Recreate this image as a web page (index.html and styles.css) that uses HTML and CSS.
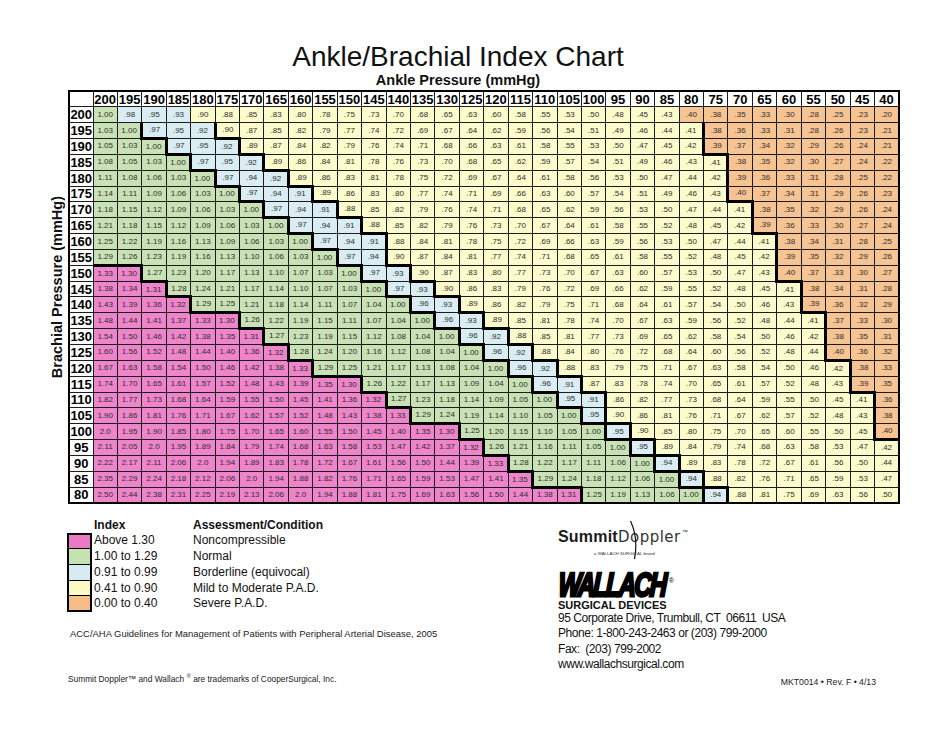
FILE: index.html
```html
<!DOCTYPE html>
<html lang="en">
<head>
<meta charset="utf-8">
<title>Ankle/Brachial Index Chart</title>
<link rel="stylesheet" href="styles.css">
</head>
<body>
<main class="page">
  <header class="titles">
    <h1 class="title">Ankle/Brachial Index Chart</h1>
    <h2 class="axis-x">Ankle Pressure (mmHg)</h2>
  </header>

  <section class="chart">
    <div class="ylabel-wrap"><span class="ylabel">Brachial Pressure (mmHg)</span></div>
    <table class="abi" id="abi"></table>
  </section>

  <section class="lower">
    <div class="legend-col">
      <div class="legend-head">
        <span></span>
        <span class="lg-text">Index</span>
        <span class="lg-text">Assessment/Condition</span>
      </div>
      <ul class="legend-list">
        <li class="legend-row"><span class="sw sw-p"></span><span class="lg-text">Above 1.30</span><span class="lg-text">Noncompressible</span></li>
        <li class="legend-row"><span class="sw sw-g"></span><span class="lg-text">1.00 to 1.29</span><span class="lg-text">Normal</span></li>
        <li class="legend-row"><span class="sw sw-b"></span><span class="lg-text">0.91 to 0.99</span><span class="lg-text">Borderline (equivocal)</span></li>
        <li class="legend-row"><span class="sw sw-y"></span><span class="lg-text">0.41 to 0.90</span><span class="lg-text">Mild to Moderate P.A.D.</span></li>
        <li class="legend-row"><span class="sw sw-o"></span><span class="lg-text">0.00 to 0.40</span><span class="lg-text">Severe P.A.D.</span></li>
      </ul>
      <p class="source">ACC/AHA Guidelines for Management of Patients with Peripheral Arterial Disease, 2005</p>
    </div>

    <div class="brand-col">
      <div class="summit"><span class="summit-bold">Summit</span><span class="summit-light">D<span class="o-mark">o<svg class="o-arc" viewBox="0 0 10 38" width="10" height="38" aria-hidden="true"><path d="M1.5 0 Q 9.5 17 5.5 38" fill="none" stroke="#111" stroke-width="1.2"/></svg></span>ppler</span><span class="tm">™</span></div>
      <div class="summit-sub">a WALLACH SURGICAL brand</div>
      <div class="wallach-line"><span class="wallach">WALLACH</span><span class="reg">®</span></div>
      <div class="surgical">SURGICAL DEVICES</div>
      <address class="address">
        <span class="addr-line">95 Corporate Drive, Trumbull, CT&nbsp; 06611&nbsp; USA</span>
        <span class="addr-line">Phone: 1-800-243-2463 or (203) 799-2000</span>
        <span class="addr-line">Fax:&nbsp; (203) 799-2002</span>
        <span class="addr-line">www.wallachsurgical.com</span>
      </address>
    </div>
  </section>

  <footer class="footer">
    <span class="tmk">Summit Doppler™ and Wallach <sup class="tmk-reg">®</sup> are trademarks of CooperSurgical, Inc.</span>
    <span class="mkt">MKT0014 • Rev. F • 4/13</span>
  </footer>
</main>
<script src="script.js"></script>
</body>
</html>
```

FILE: styles.css
```css
html, body {
  margin: 0;
  padding: 0;
  background: #fff;
}

body {
  font-family: "Liberation Sans", Arial, sans-serif;
  color: #111;
}

.page {
  width: 950px;
  height: 735px;
  overflow: hidden;
}

/* ---------- titles ---------- */
.titles {
  width: 916px;
  padding-top: 42px;
  text-align: center;
}

.title {
  margin: 0;
  font-weight: normal;
  font-size: 28px;
  line-height: 30px;
  color: #111;
}

.axis-x {
  margin: 0;
  font-weight: bold;
  font-size: 14.5px;
  line-height: 17px;
  color: #111;
}

/* ---------- chart ---------- */
.chart {
  display: flex;
  margin-top: 1px;
  padding-left: 48px;
}

.ylabel-wrap {
  width: 18px;
  margin-right: 2px;
  padding-bottom: 20px;
  display: flex;
  align-items: center;
  justify-content: center;
}

.ylabel {
  writing-mode: vertical-rl;
  transform: rotate(180deg);
  font-weight: bold;
  font-size: 14.5px;
  line-height: 18px;
  white-space: nowrap;
  color: #111;
}

.abi {
  border-collapse: collapse;
  table-layout: fixed;
  width: 832px;
  border: 2px solid #000;
}

.abi .col-lab {
  width: 24px;
}

.abi tr {
  height: 15.85px;
}

.abi th,
.abi td {
  border: 1px solid #1c1c1c;
  padding: 0;
  text-align: center;
  vertical-align: middle;
  white-space: nowrap;
  overflow: hidden;
}

.abi th {
  font-weight: bold;
  font-size: 13px;
  line-height: 1;
  color: #000;
  background: #fff;
}

.abi td {
  font-size: 8px;
  line-height: 1;
  color: #2e2e2e;
}

.v-p { background: #ee84c9; }
.v-g { background: #c9e2b5; }
.v-b { background: #d9edf2; }
.v-y { background: #fcfbcb; }
.v-o { background: #f6c392; }

.abi td.edge-t { border-top: 3px solid #000; }
.abi td.edge-l { border-left: 3px solid #000; }

/* ---------- lower area ---------- */
.lower {
  display: flex;
  align-items: flex-start;
  margin-top: 14px;
  padding-left: 67px;
}

.legend-col {
  width: 490px;
}

.legend-head,
.legend-row {
  display: grid;
  grid-template-columns: 25px 99px 1fr;
}

.legend-head {
  font-weight: bold;
  font-size: 12px;
  line-height: 14px;
  color: #111;
  margin-bottom: 1.5px;
}

.legend-list {
  list-style: none;
  margin: 0;
  padding: 0;
}

.legend-row {
  height: 15.7px;
  font-size: 12px;
  line-height: 15.7px;
  color: #111;
}

.lg-text {
  padding-left: 2px;
  white-space: nowrap;
}

.sw {
  box-sizing: border-box;
  border-left: 2px solid #000;
  border-right: 2px solid #000;
  border-bottom: 1px solid #000;
}

.sw-p { background: #ea7ac6; border-top: 2px solid #000; }
.sw-g { background: #c6e1b2; }
.sw-b { background: #d6ecf1; }
.sw-y { background: #fbfac6; }
.sw-o { background: #f5be89; border-bottom-width: 2px; }

.source {
  margin: 16.5px 0 0 3px;
  font-size: 9.45px;
  line-height: 11px;
  color: #222;
  white-space: nowrap;
}

/* ---------- brand column ---------- */
.brand-col {
  margin-top: 11px;
  padding-left: 1px;
}

.summit {
  font-size: 15px;
  line-height: 16px;
  white-space: nowrap;
  color: #1a1a1a;
}

.summit-bold {
  font-weight: bold;
  font-size: 16px;
  letter-spacing: 0.2px;
}

.summit-light {
  font-family: "DejaVu Sans", "Liberation Sans", sans-serif;
  font-weight: normal;
  font-size: 15px;
  letter-spacing: 0.5px;
  color: #333;
}

.o-mark {
  position: relative;
}

.o-arc {
  position: absolute;
  left: -1px;
  top: -7px;
}

.tm {
  font-size: 6px;
  line-height: 6px;
  vertical-align: top;
  margin-left: 1px;
}

.summit-sub {
  margin-top: 6.4px;
  padding-left: 36px;
  font-size: 4.4px;
  line-height: 6px;
  white-space: nowrap;
  color: #333;
}

.wallach-line {
  margin-top: 19.7px;
  font-size: 24px;
  line-height: 22px;
  white-space: nowrap;
}

.wallach {
  display: inline-block;
  font-style: italic;
  font-weight: bold;
  font-size: 24px;
  line-height: 22px;
  letter-spacing: -1.9px;
  -webkit-text-stroke: 2px #000;
  color: #000;
  transform: scaleY(1.38) skewX(-4deg);
  transform-origin: left 86%;
}

.reg {
  display: inline-block;
  font-size: 7px;
  line-height: 7px;
  vertical-align: top;
  margin-left: 4px;
  color: #000;
}

.surgical {
  font-weight: bold;
  font-size: 11px;
  line-height: 13px;
  color: #111;
  white-space: nowrap;
}

.address {
  margin-top: -1px;
  font-style: normal;
  font-size: 12px;
  line-height: 15.3px;
  letter-spacing: -0.45px;
  color: #111;
}

.addr-line {
  display: block;
  white-space: nowrap;
}

/* ---------- footer ---------- */
.footer {
  display: flex;
  justify-content: space-between;
  align-items: flex-start;
  margin-top: 1.2px;
  padding-left: 68px;
  padding-right: 74px;
  font-size: 8.35px;
  line-height: 12px;
  color: #222;
}

.tmk-reg {
  font-size: 6px;
  line-height: 0;
}

.mkt {
  margin-top: 3px;
  font-size: 8.7px;
}
```

FILE: script.js
```js
(function () {
  var table = document.getElementById('abi');
  var cols = [], rows = [];
  var a, b;
  for (a = 200; a >= 40; a -= 5) cols.push(a);
  for (b = 200; b >= 80; b -= 5) rows.push(b);

  function cat(n) {
    if (n >= 130) return 'p';
    if (n >= 100) return 'g';
    if (n >= 91) return 'b';
    if (n >= 41) return 'y';
    return 'o';
  }

  function fmt(n) {
    if (n === 200) return '2.0';
    var cents = n % 100;
    var s = (cents < 10 ? '0' : '') + cents;
    return (n >= 100 ? String(Math.floor(n / 100)) : '') + '.' + s;
  }

  var cg = document.createElement('colgroup');
  var c0 = document.createElement('col');
  c0.className = 'col-lab';
  cg.appendChild(c0);
  cols.forEach(function () {
    var c = document.createElement('col');
    c.className = 'col-val';
    cg.appendChild(c);
  });
  table.appendChild(cg);

  var thead = document.createElement('thead');
  var hr = document.createElement('tr');
  var corner = document.createElement('th');
  corner.className = 'corner';
  hr.appendChild(corner);
  cols.forEach(function (v) {
    var th = document.createElement('th');
    th.scope = 'col';
    th.textContent = v;
    hr.appendChild(th);
  });
  thead.appendChild(hr);
  table.appendChild(thead);

  var grid = rows.map(function (bp) {
    return cols.map(function (ap) { return Math.round(ap * 100 / bp); });
  });

  var tbody = document.createElement('tbody');
  rows.forEach(function (bp, r) {
    var tr = document.createElement('tr');
    var th = document.createElement('th');
    th.scope = 'row';
    th.textContent = bp;
    tr.appendChild(th);
    cols.forEach(function (ap, c) {
      var n = grid[r][c];
      var k = cat(n);
      var td = document.createElement('td');
      var cls = ['v-' + k];
      /* the staircase boundaries start below the first data row */
      if (r > 1 && cat(grid[r - 1][c]) !== k) cls.push('edge-t');
      if (r > 0 && c > 0 && cat(grid[r][c - 1]) !== k) cls.push('edge-l');
      td.className = cls.join(' ');
      td.textContent = fmt(n);
      tr.appendChild(td);
    });
    tbody.appendChild(tr);
  });
  table.appendChild(tbody);
})();
```
